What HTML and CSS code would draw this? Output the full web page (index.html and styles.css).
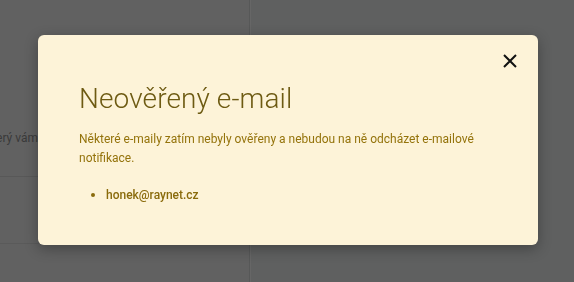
FILE: index.html
```html
<!DOCTYPE html>
<html lang="cs">
<head>
<meta charset="utf-8">
<link rel="stylesheet" href="styles.css">
</head>
<body>
<div class="page">
  <aside class="side">
    <div class="side-top"></div>
    <div class="side-row"><div class="side-clip"><span class="side-text">který vám</span></div></div>
    <div class="side-row2"></div>
  </aside>
  <main class="main"></main>
</div>
<div class="overlay">
  <div class="modal">
    <button class="close" aria-label="Zavřít">
      <svg width="14" height="14" viewBox="0 0 14 14"><path d="M1 1L13 13M13 1L1 13" stroke="#111" stroke-width="2" fill="none"/></svg>
    </button>
    <h1 class="title">Neověřený e-mail</h1>
    <p class="text">Některé e-maily zatím nebyly ověřeny a nebudou na ně odcházet e-mailové notifikace.</p>
    <ul class="list">
      <li>honek@raynet.cz</li>
    </ul>
  </div>
</div>
</body>
</html>
```
FILE: styles.css
```css
html, body {
  margin: 0;
  padding: 0;
  width: 574px;
  height: 282px;
  overflow: hidden;
  background: #5f6060;
  font-family: Roboto, "Liberation Sans", sans-serif;
}
.page {
  display: flex;
  height: 282px;
}
.side {
  width: 249px;
  border-right: 1px solid #575858;
  background: #616161;
  display: flex;
  flex-direction: column;
}
.side-top {
  height: 120px;
}
.side-row {
  height: 56px;
  border-bottom: 1px solid #585858;
  display: flex;
  align-items: center;
}
.side-clip {
  width: 38px;
  overflow: hidden;
  display: flex;
  justify-content: flex-end;
  margin-top: -20px;
}
.side-text {
  font-size: 12px;
  color: #3a3a3a;
  white-space: nowrap;
}
.side-row2 {
  height: 66px;
  border-bottom: 1px solid #5a5a5a;
}
.main {
  flex: 1;
  border-left: 1px solid #666;
}
.overlay {
  position: fixed;
  inset: 0;
}
.modal {
  position: absolute;
  left: 38px;
  top: 35px;
  width: 500px;
  height: 210px;
  box-sizing: border-box;
  background: #fdf3d8;
  border-radius: 6px;
  box-shadow: 0 4px 14px rgba(0,0,0,0.3);
  padding: 46px 40px 0 41px;
}
.close {
  position: absolute;
  top: 17px;
  right: 19px;
  width: 18px;
  height: 18px;
  padding: 0;
  border: 0;
  background: none;
  display: flex;
  align-items: center;
  justify-content: center;
}
.title {
  margin: 0;
  font-size: 28px;
  font-weight: 300;
  color: #6d5a12;
  line-height: 36px;
  letter-spacing: 0.1px;
}
.text {
  margin: 13px 0 0;
  font-size: 12px;
  line-height: 19px;
  color: #94730b;
}
.list {
  margin: 17px 0 0;
  padding-left: 27px;
  font-size: 12px;
  line-height: 19px;
  color: #8a6b0c;
  font-weight: 500;
}
.list li::marker {
  font-size: 13px;
}
```
